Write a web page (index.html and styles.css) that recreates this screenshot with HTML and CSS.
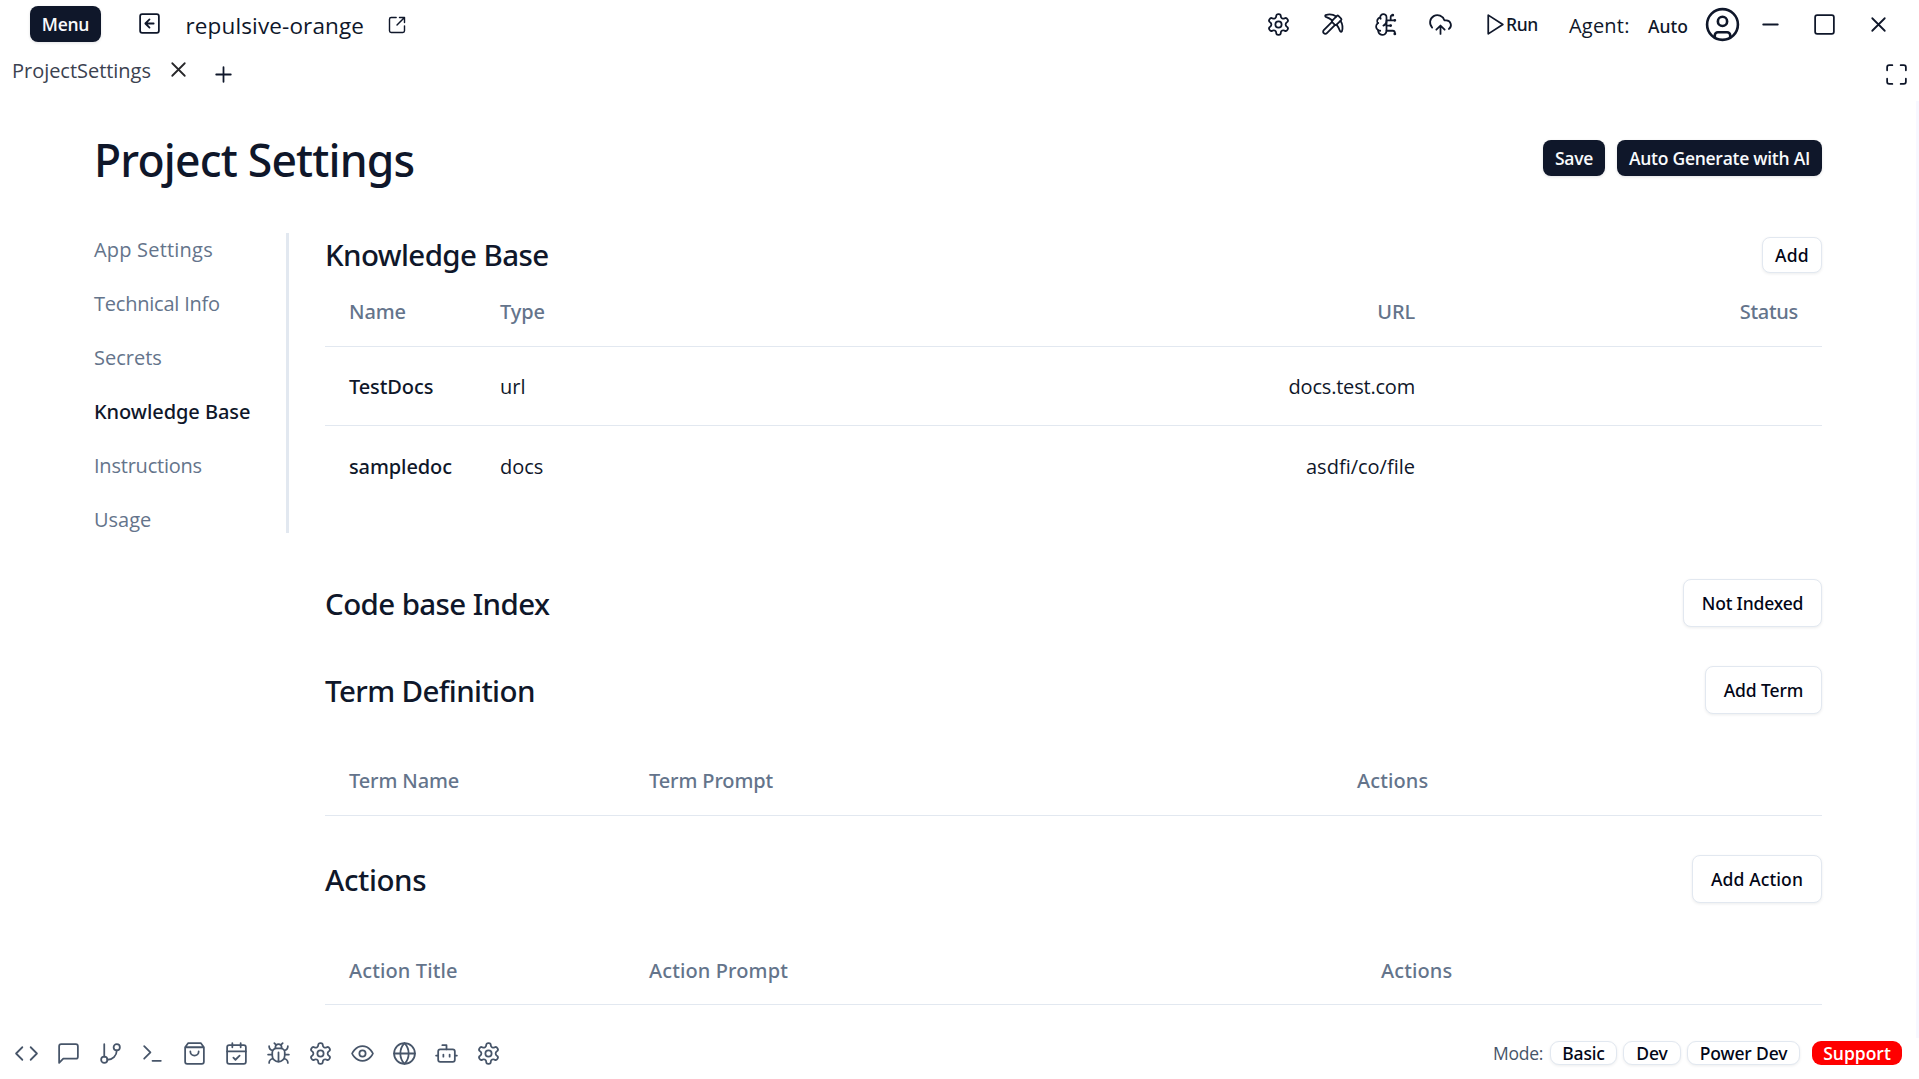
FILE: index.html
```html
<!DOCTYPE html>
<html lang="en">
<head>
<meta charset="utf-8">
<title>Project Settings</title>
<link rel="stylesheet" href="styles.css">
</head>
<body>
<svg class="sprite" aria-hidden="true">
  <symbol id="gear" viewBox="0 0 24 24"><path d="M12.22 2h-.44a2 2 0 0 0-2 2v.18a2 2 0 0 1-1 1.73l-.43.25a2 2 0 0 1-2 0l-.15-.08a2 2 0 0 0-2.73.73l-.22.38a2 2 0 0 0 .73 2.73l.15.1a2 2 0 0 1 1 1.72v.51a2 2 0 0 1-1 1.74l-.15.09a2 2 0 0 0-.73 2.73l.22.38a2 2 0 0 0 2.73.73l.15-.08a2 2 0 0 1 2 0l.43.25a2 2 0 0 1 1 1.73V20a2 2 0 0 0 2 2h.44a2 2 0 0 0 2-2v-.18a2 2 0 0 1 1-1.73l.43-.25a2 2 0 0 1 2 0l.15.08a2 2 0 0 0 2.73-.73l.22-.39a2 2 0 0 0-.73-2.73l-.15-.08a2 2 0 0 1-1-1.74v-.5a2 2 0 0 1 1-1.74l.15-.09a2 2 0 0 0 .73-2.73l-.22-.38a2 2 0 0 0-2.73-.73l-.15.08a2 2 0 0 1-2 0l-.43-.25a2 2 0 0 1-1-1.73V4a2 2 0 0 0-2-2z"/><circle cx="12" cy="12" r="3"/></symbol>
  <symbol id="close" viewBox="0 0 24 24"><path d="M18 6 6 18M6 6l12 12"/></symbol>
</svg>

<header class="topbar">
  <button class="btn btn-dark btn-menu">Menu</button>
  <svg class="icon back" viewBox="0 0 24 24"><rect x="3" y="3" width="18" height="18" rx="2"/><path d="m12 8-4 4 4 4M16 12H8"/></svg>
  <span class="project-name">repulsive-orange</span>
  <svg class="icon icon-sm" viewBox="0 0 24 24"><path d="M21 13v6a2 2 0 0 1-2 2H5a2 2 0 0 1-2-2V5a2 2 0 0 1 2-2h6M21 3l-9 9M15 3h6v6"/></svg>
  <div class="top-actions">
    <span class="cell"><svg class="icon"><use href="#gear"/></svg></span>
    <span class="cell"><svg class="icon" viewBox="0 0 24 24"><path d="M14.531 12.469 6.619 20.38a1 1 0 1 1-3-3l7.912-7.912"/><path d="M15.686 4.314A12.5 12.5 0 0 0 5.461 2.958 1 1 0 0 0 5.58 4.71a22 22 0 0 1 6.318 3.393"/><path d="M17.7 3.7a1 1 0 0 0-1.4 0l-4.6 4.6a1 1 0 0 0 0 1.4l2.6 2.6a1 1 0 0 0 1.4 0l4.6-4.6a1 1 0 0 0 0-1.4z"/><path d="M19.686 8.314a12.501 12.501 0 0 1 1.356 10.225 1 1 0 0 1-1.751-.119 22 22 0 0 0-3.393-6.319"/></svg></span>
    <span class="cell"><svg class="icon" viewBox="0 0 24 24"><path d="M12 5a3 3 0 1 0-5.997.125 4 4 0 0 0-2.526 5.77 4 4 0 0 0 .556 6.588A4 4 0 1 0 12 18Z"/><path d="M9 13a4.5 4.5 0 0 0 3-4"/><path d="M6.003 5.125A3 3 0 0 0 6.401 6.5"/><path d="M3.477 10.896a4 4 0 0 1 .585-.396"/><path d="M6 18a4 4 0 0 1-1.967-.516"/><path d="M12 13h4M12 18h6a2 2 0 0 1 2 2v1M12 8h8M16 8V5a2 2 0 0 1 2-2"/><circle cx="16" cy="13" r=".5"/><circle cx="18" cy="3" r=".5"/><circle cx="20" cy="21" r=".5"/><circle cx="20" cy="8" r=".5"/></svg></span>
    <span class="cell"><svg class="icon" viewBox="0 0 24 24"><path d="M12 13v8M4 14.899A7 7 0 1 1 15.71 8h1.79a4.5 4.5 0 0 1 2.5 8.242M8 17l4-4 4 4"/></svg></span>
    <span class="run"><svg class="icon" viewBox="0 0 24 24"><path d="m6 3 14 9-14 9z"/></svg>Run</span>
    <span class="agent">Agent:</span>
    <span class="agent-mode">Auto</span>
    <svg class="icon icon-user" viewBox="0 0 24 24"><circle cx="12" cy="12" r="10"/><circle cx="12" cy="10" r="3"/><path d="M7 20.662V19a2 2 0 0 1 2-2h6a2 2 0 0 1 2 2v1.662"/></svg>
    <span class="cell"><svg class="icon" viewBox="0 0 24 24"><path d="M5 12h14"/></svg></span>
    <span class="cell"><svg class="icon" viewBox="0 0 24 24"><rect x="3" y="3" width="18" height="18" rx="2"/></svg></span>
    <span class="cell"><svg class="icon"><use href="#close"/></svg></span>
  </div>
</header>

<div class="tabs">
  <span class="tab-label">ProjectSettings</span>
  <svg class="icon tab-close"><use href="#close"/></svg>
  <svg class="icon tab-add" viewBox="0 0 24 24"><path d="M5 12h14M12 5v14"/></svg>
  <svg class="icon expand" viewBox="0 0 24 24"><path d="M8 3H5a2 2 0 0 0-2 2v3M21 8V5a2 2 0 0 0-2-2h-3M3 16v3a2 2 0 0 0 2 2h3M16 21h3a2 2 0 0 0 2-2v-3"/></svg>
</div>

<div class="page">
  <div class="page-head">
    <h1 class="page-title">Project Settings</h1>
    <div class="page-buttons">
      <button class="btn btn-dark btn-save">Save</button>
      <button class="btn btn-dark btn-generate">Auto Generate with AI</button>
    </div>
  </div>
  <div class="columns">
    <nav class="side">
      <a class="side-link app">App Settings</a>
      <a class="side-link tight">Technical Info</a>
      <a class="side-link">Secrets</a>
      <a class="side-link active">Knowledge Base</a>
      <a class="side-link tight">Instructions</a>
      <a class="side-link">Usage</a>
    </nav>
    <main class="main">
      <section class="section knowledge">
        <div class="section-head short"><h2 class="section-title">Knowledge Base</h2><button class="btn btn-light btn-add">Add</button></div>
        <div class="row row-head kb"><span>Name</span><span>Type</span><span class="right">URL</span><span class="right status">Status</span></div>
        <div class="row kb"><span class="strong">TestDocs</span><span>url</span><span class="right url">docs.test.com</span><span></span></div>
        <div class="row kb last"><span class="strong">sampledoc</span><span>docs</span><span class="right">asdfi/co/file</span><span></span></div>
      </section>
      <section class="section index">
        <div class="section-head"><h2 class="section-title">Code base Index</h2><button class="btn btn-light btn-lg btn-index">Not Indexed</button></div>
      </section>
      <section class="section terms">
        <div class="section-head"><h2 class="section-title">Term Definition</h2><button class="btn btn-light btn-lg btn-term">Add Term</button></div>
        <div class="row row-head term"><span>Term Name</span><span>Term Prompt</span><span class="wide">Actions</span></div>
      </section>
      <section class="section">
        <div class="section-head"><h2 class="section-title actions-title">Actions</h2><button class="btn btn-light btn-lg btn-action">Add Action</button></div>
        <div class="row row-head action"><span class="wide">Action Title</span><span class="wide">Action Prompt</span><span class="wide">Actions</span></div>
      </section>
    </main>
  </div>
</div>

<footer class="statusbar">
  <div class="tools">
    <svg class="icon" viewBox="0 0 24 24"><path d="m16 18 6-6-6-6M8 6l-6 6 6 6"/></svg>
    <svg class="icon" viewBox="0 0 24 24"><path d="M21 15a2 2 0 0 1-2 2H7l-4 4V5a2 2 0 0 1 2-2h14a2 2 0 0 1 2 2z"/></svg>
    <svg class="icon" viewBox="0 0 24 24"><path d="M6 3v12M18 9a9 9 0 0 1-9 9"/><circle cx="18" cy="6" r="3"/><circle cx="6" cy="18" r="3"/></svg>
    <svg class="icon" viewBox="0 0 24 24"><path d="m4 17 6-6-6-6M12 19h8"/></svg>
    <svg class="icon" viewBox="0 0 24 24"><path d="M6 2 3 6v14a2 2 0 0 0 2 2h14a2 2 0 0 0 2-2V6l-3-4ZM3 6h18M16 10a4 4 0 0 1-8 0"/></svg>
    <svg class="icon" viewBox="0 0 24 24"><rect x="3" y="4" width="18" height="18" rx="2"/><path d="M16 2v4M8 2v4M3 10h18M9 16l2 2 4-4"/></svg>
    <svg class="icon" viewBox="0 0 24 24"><path d="m8 2 1.88 1.88M14.12 3.88 16 2M9 7.13v-1a3.003 3.003 0 1 1 6 0v1M12 20c-3.3 0-6-2.7-6-6v-3a4 4 0 0 1 4-4h4a4 4 0 0 1 4 4v3c0 3.3-2.7 6-6 6M12 20v-9M6.53 9C4.6 8.8 3 7.1 3 5M6 13H2M3 21c0-2.1 1.7-3.9 3.8-4M20.97 5c0 2.1-1.6 3.8-3.5 4M22 13h-4M17.2 17c2.1.1 3.8 1.9 3.8 4"/></svg>
    <svg class="icon"><use href="#gear"/></svg>
    <svg class="icon" viewBox="0 0 24 24"><path d="M2 12s3-7 10-7 10 7 10 7-3 7-10 7-10-7-10-7Z"/><circle cx="12" cy="12" r="3"/></svg>
    <svg class="icon" viewBox="0 0 24 24"><circle cx="12" cy="12" r="10"/><path d="M12 2a14.5 14.5 0 0 0 0 20 14.5 14.5 0 0 0 0-20M2 12h20"/></svg>
    <svg class="icon" viewBox="0 0 24 24"><path d="M12 8V4H8M2 14h2M20 14h2M15 13v2M9 13v2"/><rect x="4" y="8" width="16" height="12" rx="2"/></svg>
    <svg class="icon"><use href="#gear"/></svg>
  </div>
  <div class="modes">
    <span class="mode-label">Mode:</span>
    <button class="btn btn-light chip chip-basic">Basic</button>
    <button class="btn btn-light chip chip-dev">Dev</button>
    <button class="btn btn-light chip chip-power">Power Dev</button>
    <button class="btn chip chip-support">Support</button>
  </div>
</footer>
</body>
</html>
```
FILE: styles.css
```css
* { box-sizing: border-box; }

body {
  margin: 0;
  height: 1079px;
  overflow: hidden;
  display: flex;
  flex-direction: column;
  background: #fff;
  color: #0f172a;
  font-family: "Open Sans", "Noto Sans", sans-serif;
  font-size: 20px;
  line-height: 30px;
  white-space: nowrap;
}

.sprite { display: none; }

.icon {
  flex: none;
  width: 25px;
  height: 25px;
  fill: none;
  stroke: currentColor;
  stroke-width: 1.7;
  stroke-linecap: round;
  stroke-linejoin: round;
}
.icon-sm { width: 20px; height: 20px; margin: 2px 0 0 22.5px; }
.icon-user { width: 37px; height: 37px; margin-right: 2px; }

/* Buttons */
.btn {
  display: flex;
  align-items: center;
  justify-content: center;
  flex: none;
  height: 36px;
  padding: 0;
  border: 0;
  border-radius: 8px;
  font: 600 17.5px/24px "Open Sans", "Noto Sans", sans-serif;
  box-shadow: 0 1px 3px rgba(15, 23, 42, 0.12);
}
.btn-dark { background: #0f172a; color: #f8fafc; letter-spacing: -0.27px; }
.btn-light {
  background: #fff;
  color: #020617;
  border: 1px solid #e2e8f0;
  font-family: "Noto Sans", "Open Sans", sans-serif;
  font-weight: 500;
  box-shadow: 0 1px 3px rgba(15, 23, 42, 0.08);
}
.btn-lg { height: 48px; }
.btn-menu { width: 71px; }
.btn-save { width: 62px; }
.btn-generate { width: 205px; }
.btn-add { width: 60px; letter-spacing: 0.2px; }
.btn-index { width: 139px; letter-spacing: -0.16px; }
.btn-term { width: 117px; letter-spacing: -0.1px; }
.btn-action { width: 130px; letter-spacing: 0.11px; }

/* Top bar */
.topbar { flex: none; display: flex; align-items: center; height: 48px; padding-left: 30px; }
.back { margin: -2px 24px 0 35.5px; }
.project-name { width: 179px; margin-top: 3px; font-size: 22.5px; letter-spacing: 0.13px; }
.top-actions { display: flex; align-items: center; margin-left: auto; padding-right: 14px; }
.cell { display: flex; justify-content: center; width: 54px; }
.run, .agent-mode { font-family: "Noto Sans", "Open Sans", sans-serif; font-size: 17.5px; font-weight: 500; }
.run { display: flex; align-items: center; width: 87px; margin-left: 15px; letter-spacing: -0.33px; }
.run .icon { margin-right: -1px; }
.agent { width: 79px; margin-top: 3px; letter-spacing: 0.2px; }
.agent-mode { width: 56px; margin-top: 4px; }

/* Tabs */
.tabs { flex: none; display: flex; align-items: center; height: 53px; padding: 0 10.5px 0 12px; }
.tab-label { width: 153.5px; margin-top: -8px; color: #3b4250; letter-spacing: -0.03px; }
.tab-close { margin-top: -10px; color: #27272a; }
.tab-add { margin-left: 20px; }
.expand { margin-left: auto; }

/* Page */
.page {
  flex: none;
  height: 937px;
  padding: 27px 94px 0;
  border-right: 3px solid #f8f8ff;
}
.page-head { display: flex; align-items: center; justify-content: space-between; height: 60px; }
.page-title, .section-title { font-family: "Noto Sans", "Open Sans", sans-serif; font-weight: 500; }
.page-title { margin: 4px 0 0; font-size: 44.5px; line-height: 58px; letter-spacing: -0.82px; }
.page-buttons { display: flex; gap: 12px; }
.columns { display: flex; gap: 36px; margin-top: 45px; }

.side { flex: none; display: flex; flex-direction: column; gap: 24px; width: 195px; height: 300px; border-right: 3px solid #e2e8f0; }
.side-link { height: 30px; padding-top: 2px; color: #64748b; }
.app { letter-spacing: 0.2px; }
.tight { letter-spacing: -0.22px; }
.active { color: #0f172a; font-family: "Noto Sans", "Open Sans", sans-serif; font-weight: 500; letter-spacing: -0.06px; }

.main { flex: 1; }
.section-head { display: flex; align-items: center; justify-content: space-between; height: 48px; }
.short { height: 44px; }
.section-title { margin: 1px 0 0; font-size: 29.5px; line-height: 40px; letter-spacing: -0.6px; }
.short .section-title { margin-top: -1px; }
.actions-title { letter-spacing: -0.4px; }
.knowledge { height: 346px; }
.index { height: 87px; }
.terms { height: 189px; }

.row { display: grid; align-items: center; height: 79px; padding: 2px 24px 0; border-bottom: 1px solid #e2e8f0; }
.row-head { height: 71px; color: #64748b; font-family: "Noto Sans", "Open Sans", sans-serif; font-weight: 500; letter-spacing: -0.12px; }
.knowledge .row-head { height: 70px; padding-top: 0; }
.term, .action { margin-top: 31px; }
.action { padding-top: 3px; }
.kb { grid-template-columns: 151px 1fr 600px 383px; }
.term { grid-template-columns: 300px 708px 1fr; }
.action { grid-template-columns: 300px 732px 1fr; }
.last { border-bottom: 0; }
.right { text-align: right; }
.status { letter-spacing: -0.3px; }
.strong { font-family: "Noto Sans", "Open Sans", sans-serif; font-weight: 500; letter-spacing: -0.1px; }
.wide { letter-spacing: 0.12px; }
.url { letter-spacing: -0.2px; }

/* Status bar */
.statusbar { flex: none; display: flex; align-items: center; justify-content: space-between; height: 30px; padding: 0 17px 0 14.4px; color: #475569; }
.tools { display: flex; gap: 17px; }
.modes { display: flex; align-items: center; gap: 6px; }
.mode-label { width: 51px; font-size: 17.5px; letter-spacing: -0.28px; }
.chip { height: 24px; border-radius: 9px; letter-spacing: -0.15px; }
.chip-basic { width: 67px; }
.chip-dev { width: 58px; }
.chip-power { width: 113px; }
.chip-support { width: 90px; margin-left: 6px; background: #f00; color: #fff; letter-spacing: 0; box-shadow: none; }
```
